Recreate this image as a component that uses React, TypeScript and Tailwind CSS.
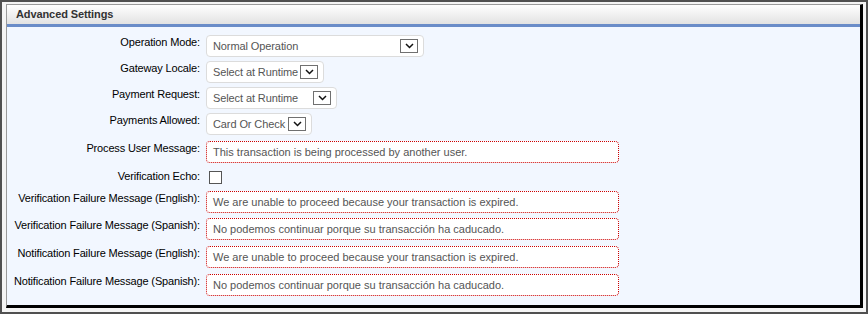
const font = { fontFamily: '"Liberation Sans", Arial, sans-serif' };

type SelectProps = { value: string; width: string };

function Chevron() {
  return (
    <span className="flex h-[14px] w-[18px] shrink-0 items-center justify-center border border-[#707070] bg-white">
      <svg width="9" height="6" viewBox="0 0 9 6">
        <path d="M1 1 L4.5 4.5 L8 1" fill="none" stroke="#111" strokeWidth="1.5" />
      </svg>
    </span>
  );
}

function FakeSelect({ value, width }: SelectProps) {
  return (
    <div className={`flex h-[22px] items-center rounded-[4px] border border-[#dcdcdc] bg-white pl-[6px] pr-[5px] ${width}`}>
      <span className="flex-1 overflow-hidden whitespace-nowrap text-[11px] leading-none tracking-[-0.1px] text-[#555]">{value}</span>
      <Chevron />
    </div>
  );
}

function TextBox({ value }: { value: string }) {
  return (
    <div className="flex h-[22px] w-[413px] items-center rounded-[4px] border border-dotted border-[#cc0000] bg-white pl-[6px] text-[11px] leading-none text-[#555]">
      {value}
    </div>
  );
}

function Row({ label, children, mb = 'mb-[4px]', h = 'h-[22px]' }: { label: string; children: React.ReactNode; mb?: string; h?: string }) {
  return (
    <div className={`flex ${h} ${mb}`}>
      <div className="w-[193px] shrink-0 whitespace-nowrap text-right text-[11px] leading-[14px] tracking-[-0.15px] text-black">{label}</div>
      <div className="ml-[6px]">{children}</div>
    </div>
  );
}

export default function App() {
  return (
    <div style={font} className="h-[314px] w-[868px] border-2 border-[#505050] bg-[#f4f4f4] pl-[4px] pt-[2px]">
      <div className="h-[304px] w-[857px] border-l border-t border-[#9a9a9a] border-r-[3px] border-b-[3px] border-r-black border-b-black bg-[#f2f7ff]">
        <div className="flex h-[19px] items-center bg-gradient-to-b from-white to-[#e2e2e2] pl-[9px] text-[11px] font-bold tracking-[-0.1px] text-[#333]">
          Advanced Settings
        </div>
        <div className="h-[3px] bg-[#6a8cc8]" />
        <div className="pt-[8px]">
          <Row label="Operation Mode:">
            <FakeSelect value="Normal Operation" width="w-[218px]" />
          </Row>
          <Row label="Gateway Locale:">
            <FakeSelect value="Select at Runtime" width="w-[118px]" />
          </Row>
          <Row label="Payment Request:">
            <FakeSelect value="Select at Runtime" width="w-[131px]" />
          </Row>
          <Row label="Payments Allowed:" mb="mb-[6px]">
            <FakeSelect value="Card Or Check" width="w-[106px]" />
          </Row>
          <Row label="Process User Message:" mb="mb-[6px]">
            <TextBox value="This transaction is being processed by another user." />
          </Row>
          <Row label="Verification Echo:" h="h-[17px]" mb="mb-[5px]">
            <div className="ml-[3px] mt-[2px] h-[13px] w-[13px] border border-[#555] bg-white" />
          </Row>
          <Row label="Verification Failure Message (English):" mb="mb-[5px]">
            <TextBox value="We are unable to proceed because your transaction is expired." />
          </Row>
          <Row label="Verification Failure Message (Spanish):" mb="mb-[6px]">
            <TextBox value="No podemos continuar porque su transacción ha caducado." />
          </Row>
          <Row label="Notification Failure Message (English):" mb="mb-[6px]">
            <TextBox value="We are unable to proceed because your transaction is expired." />
          </Row>
          <Row label="Notification Failure Message (Spanish):">
            <TextBox value="No podemos continuar porque su transacción ha caducado." />
          </Row>
        </div>
      </div>
    </div>
  );
}
